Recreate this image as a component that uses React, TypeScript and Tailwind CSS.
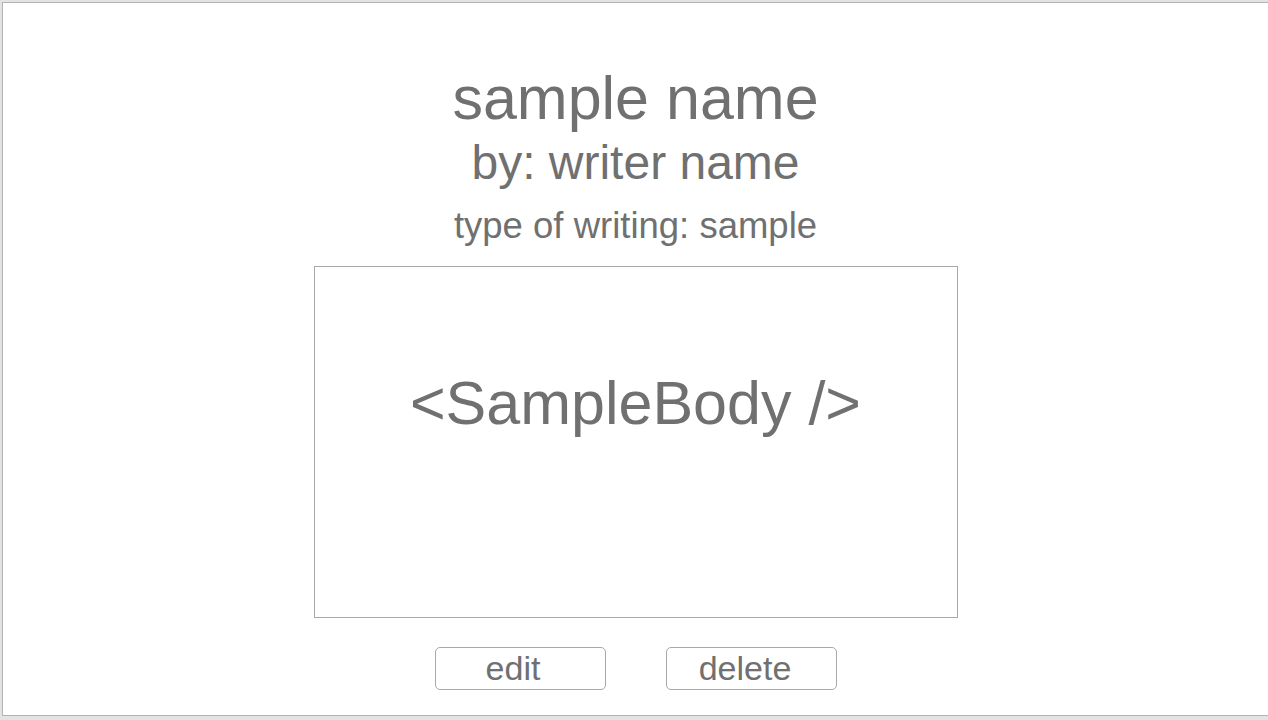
export default function App() {
  return (
    <div className="w-[1268px] h-[720px] overflow-hidden bg-[#e3e3e3] pt-[2px] pl-[2px]" style={{ fontFamily: '"Liberation Sans", Arial, sans-serif' }}>
      <div className="w-[1266px] h-[714px] bg-white border-l border-t border-b border-[#b3b3b3] flex flex-col items-center text-[#707070]">
        <h1 className="mt-[65px] text-[61px] leading-none">sample name</h1>
        <h2 className="mt-[10px] text-[48px] leading-none">by: writer name</h2>
        <h3 className="mt-[21px] text-[36.5px] leading-none">type of writing: sample</h3>
        <div className="mt-[21px] w-[644px] h-[352px] border border-[#a8a8a8] flex flex-col items-center pt-[106px]">
          <div className="text-[61px] leading-none">&lt;SampleBody /&gt;</div>
        </div>
        <div className="mt-[29px] flex gap-[60px]">
          <button className="w-[171px] h-[43px] border border-[#a8a8a8] rounded-[5px] flex items-center justify-center pr-[14px] text-[34px] leading-none">edit</button>
          <button className="w-[171px] h-[43px] border border-[#a8a8a8] rounded-[5px] flex items-center justify-center pr-[12px] text-[34px] leading-none">delete</button>
        </div>
      </div>
    </div>
  );
}
